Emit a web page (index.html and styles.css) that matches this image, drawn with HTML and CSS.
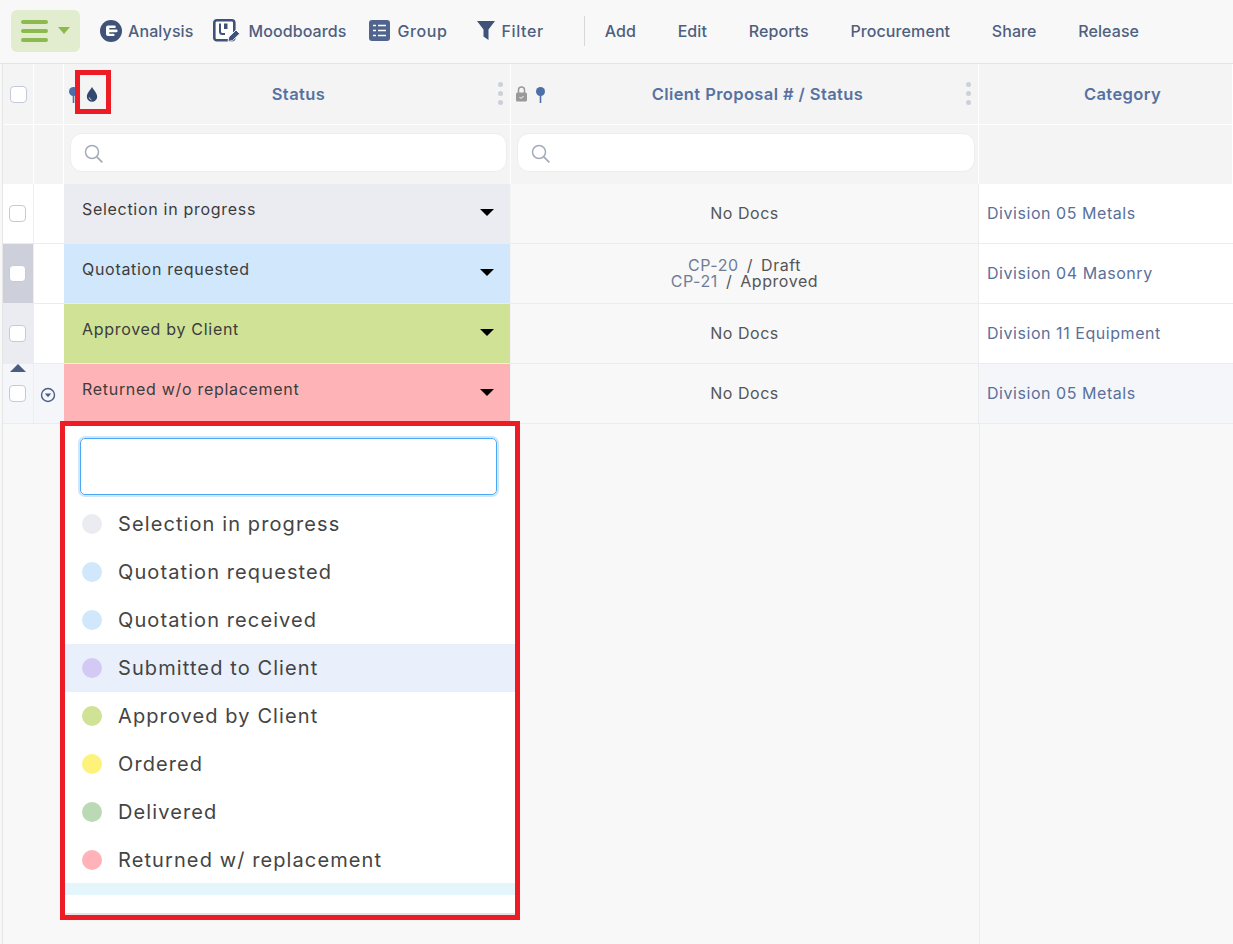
FILE: index.html
```html
<!DOCTYPE html>
<html lang="en">
<head>
    <meta charset="UTF-8">
    <title>Status column</title>
    <link rel="stylesheet" href="styles.css">
</head>
<body>
<div class="page">
    <header class="toolbar">
        <button class="menu-btn">
            <span class="burger"><i></i><i></i><i></i></span>
            <span class="menu-caret"></span>
        </button>
        <a class="tool tool-analysis">
            <svg width="22" height="22" viewBox="0 0 22 22"><circle cx="11" cy="11" r="11" fill="#3f5278"/><path d="M6 7.500a2 2 0 0 1 2-2h6.500a1.200 1.200 0 0 1 0 2.600H9.300v1.500h7a1.200 1.200 0 0 1 0 2.600h-7v1.600h4.200a1.100 1.100 0 0 1 0 2.200H8a2 2 0 0 1-2-2z" fill="#fff"/></svg>
            Analysis
        </a>
        <a class="tool tool-moodboards">
            <svg width="28" height="24" viewBox="0 0 28 24"><rect x="1.300" y="1.300" width="20" height="20" rx="2.500" fill="#fff" stroke="#3f5278" stroke-width="2.600"/><path d="M7 4.500v8a2.500 2.500 0 0 0 2.500 2.500h2.500" fill="none" stroke="#3f5278" stroke-width="2"/><path d="M11 4.500h3.500v5.500h-3.500z" fill="#3f5278"/><path d="M15 22.500l.8-4.500 7.200-7 3.700 3.700-7.200 7z" fill="#3f5278" stroke="#f8f8f8"/></svg>
            Moodboards
        </a>
        <a class="tool tool-group">
            <svg width="21" height="21" viewBox="0 0 21 21"><rect width="21" height="21" rx="3" fill="#50648e"/><path d="M4 5.500h3M9 5.500h8M4 10.500h3M9 10.500h8M4 15.500h3M9 15.500h8" stroke="#fff" stroke-width="1.500"/></svg>
            Group
        </a>
        <a class="tool tool-filter">
            <svg width="18" height="19" viewBox="0 0 18 19"><path d="M0 0h18l-6.500 8.500V19l-5-3.500V8.500z" fill="#3f5278"/></svg>
            Filter
        </a>
        <span class="tool-sep"></span>
        <a class="tool-link">Add</a>
        <a class="tool-link">Edit</a>
        <a class="tool-link">Reports</a>
        <a class="tool-link">Procurement</a>
        <a class="tool-link">Share</a>
        <a class="tool-link">Release</a>
    </header>

    <main class="table">
        <div class="row head">
            <div class="cell"><span class="check"></span></div>
            <div class="cell"></div>
            <div class="cell head-title head-status">
                <svg class="pin pin-status" width="9" height="16" viewBox="0 0 9 16"><circle cx="4.500" cy="4.500" r="4.500" fill="#4d6fa8"/><path d="M3.700 8h1.600v8H3.700z" fill="#4d6fa8"/></svg>
                <svg class="drop" width="12" height="15" viewBox="0 0 12 16"><path d="M6 0C4.500 3 .5 6.500.5 10.300a5.500 5.500 0 0 0 11 0C11.500 6.500 7.500 3 6 0z" fill="#34476c"/><path d="M3 11a3 3 0 0 0 2.500 2.700" stroke="#c9d0de" fill="none"/></svg>
                Status
                <span class="dots"><i></i><i></i><i></i></span>
            </div>
            <div class="cell head-title head-proposal">
                <svg class="lock" width="11" height="16" viewBox="0 0 11 16"><path d="M2.500 7V4a3 3 0 0 1 6 0v3" fill="none" stroke="#999" stroke-width="1.500"/><rect y="6.500" width="11" height="9" rx="1.500" fill="#999"/><path d="M3.500 11l1.500 1.500 2.500-2.500" stroke="#fff" fill="none"/></svg>
                <svg class="pin pin-proposal" width="9" height="16" viewBox="0 0 9 16"><circle cx="4.500" cy="4.500" r="4.500" fill="#4d6fa8"/><path d="M3.700 8h1.600v8H3.700z" fill="#4d6fa8"/></svg>
                Client Proposal # / Status
                <span class="dots"><i></i><i></i><i></i></span>
            </div>
            <div class="cell head-title head-category">Category</div>
        </div>

        <div class="row filters">
            <div class="cell"></div>
            <div class="cell"></div>
            <div class="cell filter-cell">
                <div class="search">
                    <svg width="20" height="20" viewBox="0 0 20 20"><circle cx="8" cy="8" r="6.500" fill="none" stroke="#a4abba" stroke-width="1.500"/><path d="M12.800 12.800l5.500 5.500" stroke="#a4abba" stroke-width="1.800"/></svg>
                </div>
            </div>
            <div class="cell filter-cell">
                <div class="search">
                    <svg width="20" height="20" viewBox="0 0 20 20"><circle cx="8" cy="8" r="6.500" fill="none" stroke="#a4abba" stroke-width="1.500"/><path d="M12.800 12.800l5.500 5.500" stroke="#a4abba" stroke-width="1.800"/></svg>
                </div>
            </div>
            <div class="cell"></div>
        </div>

        <div class="row item">
            <div class="cell c-check"><span class="check"></span></div>
            <div class="cell c-expand"></div>
            <div class="cell c-status st-grey">Selection in progress<span class="caret"></span></div>
            <div class="cell c-docs">No Docs</div>
            <div class="cell c-cat">Division 05 Metals</div>
        </div>
        <div class="row item row-drag">
            <div class="cell c-check"><span class="check"></span></div>
            <div class="cell c-expand"></div>
            <div class="cell c-status st-blue">Quotation requested<span class="caret"></span></div>
            <div class="cell c-docs c-docs-list">
                <div><span class="doc-id">CP-20</span> <span class="doc-sep">/</span> Draft</div>
                <div><span class="doc-id">CP-21</span> <span class="doc-sep">/</span> Approved</div>
            </div>
            <div class="cell c-cat">Division 04 Masonry</div>
        </div>
        <div class="row item row-hover">
            <div class="cell c-check"><span class="check"></span></div>
            <div class="cell c-expand"></div>
            <div class="cell c-status st-green">Approved by Client<span class="caret"></span></div>
            <div class="cell c-docs">No Docs</div>
            <div class="cell c-cat">Division 11 Equipment</div>
        </div>
        <div class="row item row-active">
            <div class="cell c-check">
                <span class="up-arrow"></span>
                <span class="check"></span>
            </div>
            <div class="cell c-expand">
                <svg width="16" height="16" viewBox="0 0 16 16"><circle cx="8" cy="8" r="6.500" fill="none" stroke="#4a5d85" stroke-width="1.400"/><path d="M4.800 6.600h6.400L8 10.200z" fill="#4a5d85"/></svg>
            </div>
            <div class="cell c-status st-red">Returned w/o replacement<span class="caret"></span></div>
            <div class="cell c-docs">No Docs</div>
            <div class="cell c-cat">Division 05 Metals</div>
        </div>
        <div class="row rest">
            <div></div><div></div><div></div><div></div><div class="rest-cat"></div>
        </div>
    </main>

    <div class="status-menu">
        <div class="status-input"></div>
        <ul class="status-list">
            <li><i class="dot" style="background:#ebecf1"></i>Selection in progress</li>
            <li><i class="dot" style="background:#d0e7fc"></i>Quotation requested</li>
            <li><i class="dot" style="background:#d0e7fc"></i>Quotation received</li>
            <li class="is-hover"><i class="dot" style="background:#d4c9f5"></i>Submitted to Client</li>
            <li><i class="dot" style="background:#cfe295"></i>Approved by Client</li>
            <li><i class="dot" style="background:#fdf27a"></i>Ordered</li>
            <li><i class="dot" style="background:#bcd9b5"></i>Delivered</li>
            <li><i class="dot" style="background:#ffb3b8"></i>Returned w/ replacement</li>
        </ul>
        <div class="status-bar"></div>
    </div>
    <div class="mark-drop"></div>
</div>
</body>
</html>
```

FILE: styles.css
```css
* {
    box-sizing: border-box;
}
body {
    margin: 0;
    font-family: Inter, "Noto Sans", sans-serif;
    background-color: #f8f8f8;
    color: #4a4a4a;
}
.page {
    position: relative;
    width: 1233px;
    height: 944px;
    overflow: hidden;
    display: flex;
    flex-direction: column;
    padding-left: 2px;
}

/* toolbar */
.toolbar {
    height: 64px;
    flex: none;
    margin-left: -2px;
    padding: 0 0 2px 11px;
    display: flex;
    align-items: center;
    border-bottom: 1px solid #e4e4e4;
    background-color: #f8f8f8;
}
.menu-btn {
    width: 69px;
    height: 42px;
    border: none;
    border-radius: 6px;
    background-color: #e2edcf;
    padding: 0 10px;
    display: flex;
    align-items: center;
    margin-right: 20px;
}
.burger {
    display: flex;
    flex-direction: column;
    gap: 5px;
    margin-right: 10px;
}
.burger i {
    display: block;
    width: 27px;
    height: 4px;
    border-radius: 2px;
    background-color: #8cba4f;
}
.menu-caret {
    border-left: 6px solid transparent;
    border-right: 6px solid transparent;
    border-top: 7px solid #8cba4f;
}
.tool {
    display: flex;
    align-items: center;
    font-size: 16px;
    font-weight: 500;
    letter-spacing: 0.1px;
    color: #4f5f80;
}
.tool svg {
    margin-right: 7px;
}
.tool-analysis svg { margin-right: 6px; }
.tool-moodboards { margin-left: 20px; }
.tool-group { margin-left: 23px; letter-spacing: 0.6px; }
.tool-filter { margin-left: 29px; letter-spacing: 0.6px; }
.tool-sep {
    width: 1px;
    height: 30px;
    background-color: #d8d8d8;
    margin: 0 20px 0 40px;
}
.tool-link {
    font-size: 16px;
    font-weight: 500;
    letter-spacing: 0.1px;
    color: #4f5f80;
    margin-right: 41.600px;
}

/* table */
.table {
    flex: 1;
    display: flex;
    flex-direction: column;
    border-left: 1px solid #e6e6e6;
}
.row {
    display: grid;
    grid-template-columns: 31px 30px 447px 468px 1fr;
}
.cell {
    display: flex;
    align-items: center;
    border-right: 1px solid #fff;
}
.head {
    height: 61px;
    background-color: #f4f4f4;
    border-bottom: 1px solid #fff;
}
.head .cell:first-child {
    padding-left: 7px;
}
.head-title {
    position: relative;
    justify-content: center;
    font-size: 16.500px;
    font-weight: 600;
    letter-spacing: 0.4px;
    color: #5672a2;
}
.head-status { padding-left: 23px; }
.head-proposal { padding-left: 26px; }
.head-category { padding-left: 34px; }
.pin, .drop, .lock {
    position: absolute;
}
.pin-status { left: 5px; top: 23px; }
.drop { left: 22px; top: 23px; }
.lock { left: 5px; top: 22px; }
.pin-proposal { left: 25px; top: 23px; }
.dots {
    position: absolute;
    right: 7px;
    top: 18px;
    display: flex;
    flex-direction: column;
    gap: 4px;
}
.dots i {
    display: block;
    width: 5px;
    height: 5px;
    border-radius: 50%;
    background-color: #ccd0d8;
}
.check {
    display: block;
    width: 17px;
    height: 17px;
    border: 1px solid #c5cad8;
    border-radius: 4px;
    background-color: #fff;
}
.filters {
    height: 59px;
    background-color: #f4f4f4;
}
.filter-cell {
    padding: 0 3px 4px 6px;
}
.search {
    width: 100%;
    height: 39px;
    background-color: #fff;
    border: 1px solid #ededed;
    border-radius: 12px;
    padding: 2px 0 0 13px;
    display: flex;
    align-items: center;
}
.item {
    height: 60px;
    font-size: 16px;
    letter-spacing: 0.55px;
    border-bottom: 1px solid #ececec;
}
.c-check {
    padding-left: 6px;
    background-color: #fff;
    position: relative;
    border-right-color: #eee;
}
.c-expand {
    background-color: #fff;
    justify-content: center;
    padding: 2px 2px 0 0;
    border-right: none;
}
.c-status {
    position: relative;
    align-items: flex-start;
    padding: 15px 0 0 18px;
    color: #3c3c3c;
    letter-spacing: 0.7px;
    border-right: 1px solid #f4f4f4;
}
.caret {
    position: absolute;
    right: 16px;
    top: 25px;
    border-left: 7px solid transparent;
    border-right: 7px solid transparent;
    border-top: 7px solid #000;
}
.st-grey { background-color: #ebecf1; }
.st-blue { background-color: #d0e7fc; }
.st-green { background-color: #cfe295; }
.st-red { background-color: #feb4b7; }
.c-docs {
    justify-content: center;
    padding-bottom: 2px;
    border-right: 1px solid #ececec;
    color: #555;
}
.c-docs-list {
    flex-direction: column;
    line-height: 16px;
}
.doc-id {
    color: #6f7d99;
}
.doc-sep {
    margin: 0 3px;
}
.c-cat {
    background-color: #fff;
    padding: 0 0 2px 8px;
    color: #5a709a;
    border-right: none;
}
.row-drag .c-check { background-color: #cdd0da; }
.row-hover .c-check { background-color: #ebecf1; }
.row-active .c-check,
.row-active .c-expand,
.row-active .c-cat {
    background-color: #f4f6fa;
}
.up-arrow {
    position: absolute;
    left: 7px;
    top: 0;
    border-left: 8px solid transparent;
    border-right: 8px solid transparent;
    border-bottom: 8px solid #4a5d80;
}
.rest {
    flex: 1;
}
.rest-cat {
    border-left: 1px solid #ececec;
}

/* status dropdown */
.status-menu {
    position: absolute;
    left: 60px;
    top: 421px;
    width: 460px;
    height: 499px;
    border: 5px solid #ed1c24;
    background-color: #fff;
    box-shadow: inset 0 -2px 0 #e4e4e4;
    padding-top: 12px;
}
.status-input {
    height: 57px;
    margin: 0 18px 5px 15px;
    border: 1px solid #4aa8f8;
    border-radius: 5px;
    box-shadow: 0 0 0 2px #cfe6fb;
}
.status-list {
    list-style: none;
    margin: 0;
    padding: 0;
}
.status-list li {
    height: 48px;
    display: flex;
    align-items: center;
    padding-left: 17px;
    font-size: 20px;
    letter-spacing: 1.100px;
    color: #444;
}
.status-list li.is-hover {
    background-color: #e9f0fb;
}
.dot {
    width: 20px;
    height: 20px;
    border-radius: 50%;
    margin-right: 16px;
    flex: none;
}
.status-bar {
    height: 12px;
    margin-top: -1px;
    background-color: #e4f5fc;
}
.mark-drop {
    position: absolute;
    left: 75px;
    top: 70px;
    width: 36px;
    height: 44px;
    border: 5px solid #ed1c24;
}
```
